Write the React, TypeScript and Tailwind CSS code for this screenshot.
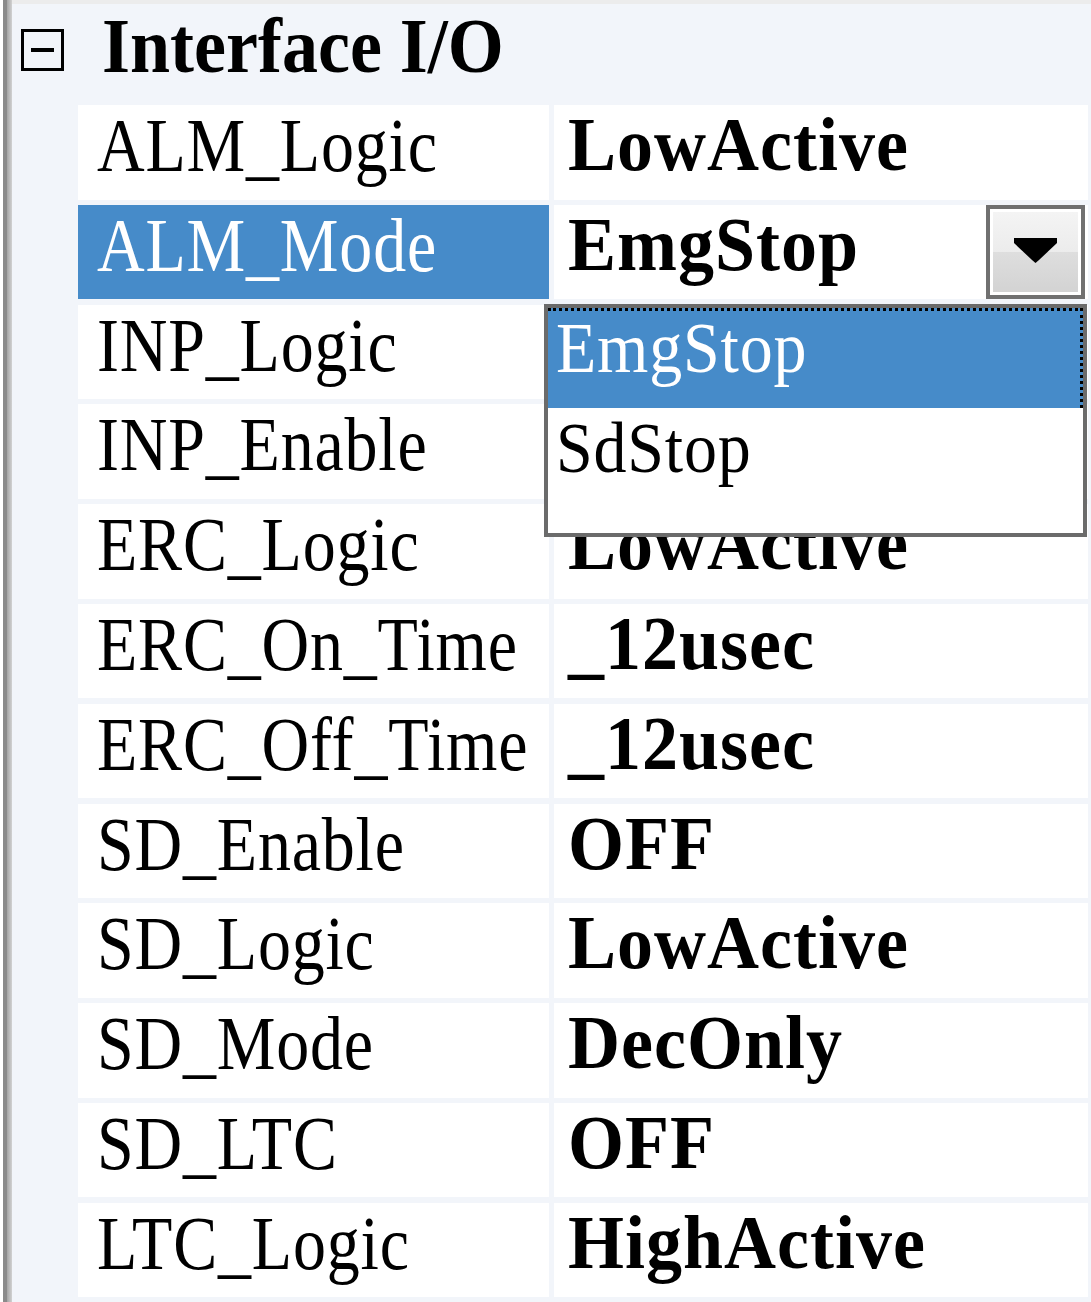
import React from "react";

interface Prop {
  name: string;
  value: string;
}

const PROPS: Prop[] = [
  { name: "ALM_Logic", value: "LowActive" },
  { name: "ALM_Mode", value: "EmgStop" },
  { name: "INP_Logic", value: "LowActive" },
  { name: "INP_Enable", value: "OFF" },
  { name: "ERC_Logic", value: "LowActive" },
  { name: "ERC_On_Time", value: "_12usec" },
  { name: "ERC_Off_Time", value: "_12usec" },
  { name: "SD_Enable", value: "OFF" },
  { name: "SD_Logic", value: "LowActive" },
  { name: "SD_Mode", value: "DecOnly" },
  { name: "SD_LTC", value: "OFF" },
  { name: "LTC_Logic", value: "HighActive" },
];

const OPTIONS = ["EmgStop", "SdStop"];

function DropButton() {
  return (
    <div className="mr-[3px] w-[99px] self-stretch border-[4px] border-[#707070] bg-white p-[3px]">
      <div className="flex h-full w-full items-center justify-center bg-[linear-gradient(to_bottom,#f4f4f4_0%,#ececec_50%,#dedede_50%,#d3d3d3_100%)]">
        <svg width="43" height="25" viewBox="0 0 43 25" className="mt-[-4px]">
          <polygon points="0,0 43,0 43,5 25,22 21.5,25 18,22 0,5" fill="#000" />
        </svg>
      </div>
    </div>
  );
}

export default function App() {
  const selected = "ALM_Mode";

  return (
    <div className="relative h-[1302px] w-[1091px] overflow-hidden bg-white font-['Liberation_Serif','DejaVu_Serif',serif] text-black">
      <div className="flex h-full pl-[3px]">
        {/* left edge */}
        <div className="w-[4px] bg-[#8a8a8a]" />
        <div className="w-[5px] bg-gradient-to-r from-[#a4a4a4] to-[#d2d2d2]" />

        <div className="flex flex-1 flex-col border-t-[4px] border-[#ececec] bg-[#f2f5fa]">
          {/* category */}
          <div className="flex h-[101px] items-start">
            <div className="ml-[9px] mt-[25px] flex h-[42px] w-[43px] items-center justify-center border-[3px] border-black">
              <div className="h-[4px] w-[23px] bg-black" />
            </div>
            <span className="ml-[38px] mt-[2px] block origin-top scale-y-[1.1] text-[72px] font-bold leading-none">
              Interface I/O
            </span>
          </div>

          {/* rows */}
          <div className="flex flex-col gap-[5.3px] pl-[66px]">
            {PROPS.map((p) => {
              const isSel = p.name === selected;
              return (
                <div key={p.name} className="grid h-[94.5px] grid-cols-[471px_534px] gap-x-[5px]">
                  <div className={`pl-[19px] pt-[2px] ${isSel ? "bg-[#468bc9] text-white" : "bg-white"}`}>
                    <span className="block origin-top scale-y-[1.167] text-[66px] leading-none tracking-[0.8px]">
                      {p.name}
                    </span>
                  </div>
                  <div className="flex items-start bg-white pl-[14px]">
                    <span className="block origin-top scale-y-[1.07] pt-[1px] text-[72px] font-bold leading-none tracking-[1px]">
                      {p.value}
                    </span>
                    {isSel && (
                      <div className="ml-auto flex self-stretch">
                        <DropButton />
                      </div>
                    )}
                  </div>
                </div>
              );
            })}
          </div>
        </div>
      </div>

      {/* open list */}
      <div className="absolute left-[544px] top-[304px] h-[233px] w-[543px] border-[4px] border-[#6b6b6b] bg-white">
        {OPTIONS.map((o, i) => (
          <div
            key={o}
            className={`h-[100px] pl-[8px] ${
              i === 0
                ? "border-r-[3px] border-t-[3px] border-dotted border-black bg-[#468bc9] text-white"
                : "pt-[3px]"
            }`}
          >
            <span className="block origin-top scale-y-[1.1] text-[66px] leading-none tracking-[0.8px]">{o}</span>
          </div>
        ))}
      </div>
    </div>
  );
}
